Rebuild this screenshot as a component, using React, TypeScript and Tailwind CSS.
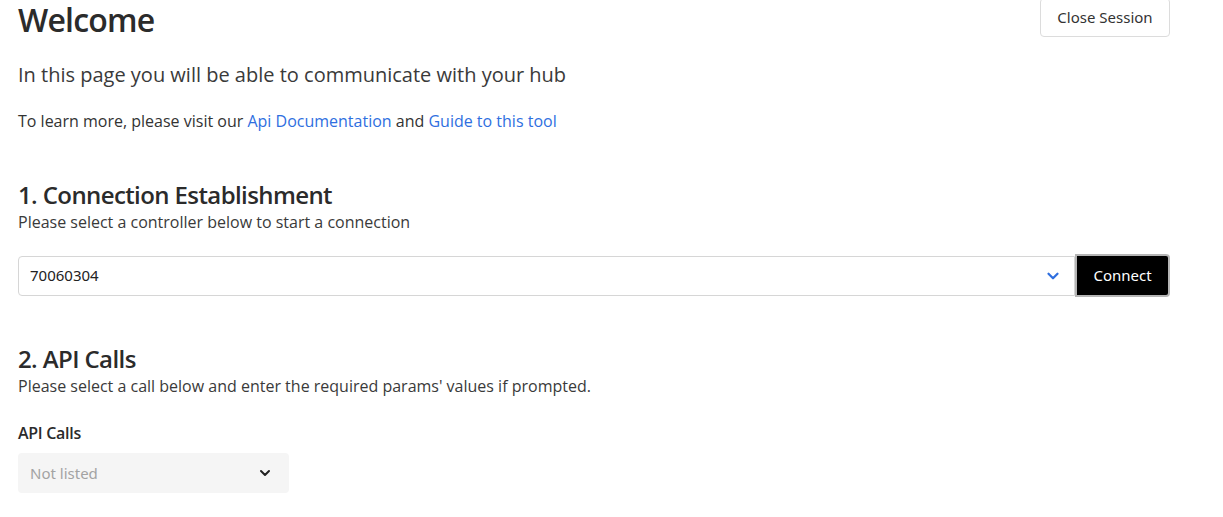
import { ChevronDown } from 'lucide-react';

const mainFont = { fontFamily: '"Open Sans", "Noto Sans", sans-serif' };

export default function App() {
  return (
    <div className="min-h-screen bg-white text-[#333333]" style={mainFont}>
      <div className="w-[1170px] pl-[18px]">
        {/* Header */}
        <div className="flex items-start justify-between">
          <h1 className="text-[32px] leading-[40px] font-semibold tracking-[-0.8px] text-[#2b2b2b]">Welcome</h1>
          <button className="-mt-[2px] h-[39px] w-[130px] border border-[#dcdcdc] rounded-[4px] bg-white text-[15px] text-[#333] font-['Noto_Sans',sans-serif]">
            Close Session
          </button>
        </div>

        <p className="mt-[21px] text-[20px] leading-[28px] text-[#3a3a3a]">
          In this page you will be able to communicate with your hub
        </p>

        <p className="mt-[21px] text-[16px] leading-[22px] text-[#333]">
          To learn more, please visit our{' '}
          <a href="#" className="text-[#2f6fdf]">Api Documentation</a> and{' '}
          <a href="#" className="text-[#2f6fdf]">Guide to this tool</a>
        </p>

        {/* Section 1 */}
        <h2 className="mt-[47px] text-[24px] leading-[32px] font-semibold tracking-[-0.6px] text-[#2b2b2b]">1. Connection Establishment</h2>
        <p className="text-[16px] leading-[22px] text-[#3a3a3a]">Please select a controller below to start a connection</p>

        <div className="mt-[21px] flex h-[43px] items-center">
          <div className="flex h-[40px] flex-1 items-center justify-between rounded-l-[4px] border border-[#d6d6d6] pl-[11px] pr-[12px]">
            <span className="text-[15px] text-[#222] font-['Noto_Sans',sans-serif]">70060304</span>
            <ChevronDown size={18} strokeWidth={3} className="text-[#2f6fdf]" />
          </div>
          <button className="h-[43px] w-[95px] rounded-r-[4px] border-2 border-[#b5b5b5] bg-black text-[15px] text-white font-['Noto_Sans',sans-serif]">
            Connect
          </button>
        </div>

        {/* Section 2 */}
        <h2 className="mt-[46px] text-[24px] leading-[32px] font-semibold tracking-[-0.6px] text-[#2b2b2b]">2. API Calls</h2>
        <p className="text-[16px] leading-[22px] text-[#3a3a3a]">Please select a call below and enter the required params' values if prompted.</p>

        <label className="mt-[25px] block text-[16px] leading-[22px] font-semibold tracking-[-0.3px] text-[#2b2b2b]">API Calls</label>
        <div className="mt-[9px] flex h-[40px] w-[271px] items-center justify-between rounded-[4px] bg-[#f5f5f5] pl-[12px] pr-[16px]">
          <span className="text-[15px] text-[#a3a3a3] font-['Noto_Sans',sans-serif]">Not listed</span>
          <ChevronDown size={16} strokeWidth={3} className="text-[#222]" />
        </div>
      </div>
    </div>
  );
}
